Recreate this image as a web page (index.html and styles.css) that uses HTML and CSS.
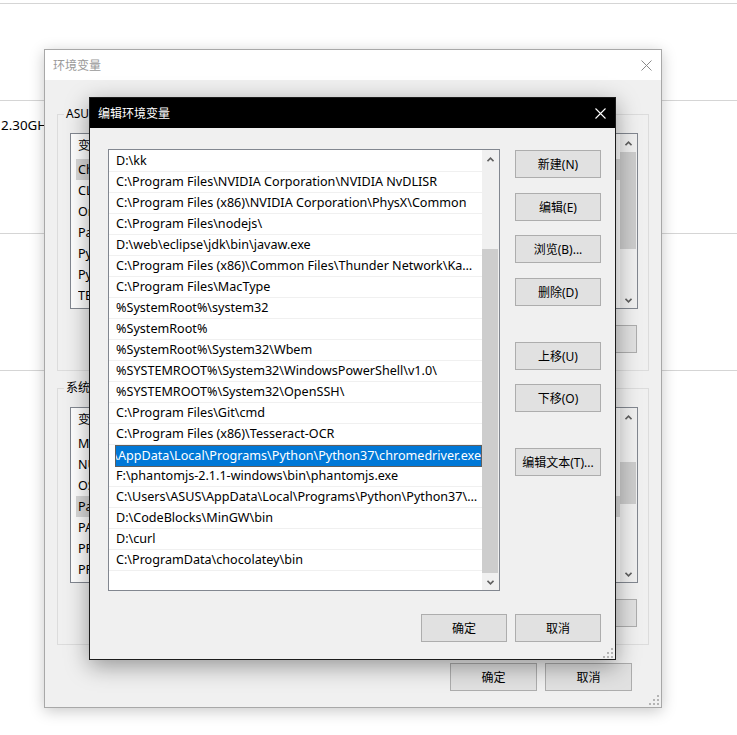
FILE: index.html
```html
<!DOCTYPE html>
<html lang="zh-CN">
<head>
<meta charset="utf-8">
<title>编辑环境变量</title>
<link rel="stylesheet" href="styles.css">
</head>
<body>
<div class="desk">
  <div class="desk-top"></div>
  <div class="desk-row1"></div>
  <div class="desk-row2"><span class="desk-text">2.30GHz</span></div>
  <div class="desk-row3"></div>
</div>

<div class="win-outer">
  <div class="outer-title">
    <span>环境变量</span>
    <span class="close-box"><svg width="11" height="11" viewBox="0 0 11 11"><path d="M0.5 0.5L10.5 10.5M10.5 0.5L0.5 10.5" stroke="#8a8a8a" stroke-width="1" fill="none"/></svg></span>
  </div>
  <div class="outer-body">
    <div class="group">
      <div class="group-title">ASUS 的用户变量(U)</div>
      <div class="olist">
        <div class="ol-cols">
          <div class="ol-head"><span class="c1">变量</span><span class="c2">值</span></div>
          <div class="ol-row sel"><span class="c1">ChocolateyLastPathUpdate</span><span class="c2">132097562843218740</span></div>
          <div class="ol-row"><span class="c1">CLASSPATH</span><span class="c2">.;%JAVA_HOME%\lib</span></div>
          <div class="ol-row"><span class="c1">OneDrive</span><span class="c2">C:\Users\ASUS\OneDrive</span></div>
          <div class="ol-row"><span class="c1">Path</span><span class="c2">C:\Users\ASUS\AppData\Local\Programs\Python\Python37\Scripts\</span></div>
          <div class="ol-row"><span class="c1">PyCharm</span><span class="c2">D:\PyCharm\bin;</span></div>
          <div class="ol-row"><span class="c1">PyCharm Community Edition</span><span class="c2">D:\PyCharm Community Edition\bin;</span></div>
          <div class="ol-row"><span class="c1">TEMP</span><span class="c2">%USERPROFILE%\AppData\Local\Temp</span></div>
        </div>
        <div class="sb">
          <div class="sb-btn"><svg width="7" height="5" viewBox="0 0 7 5"><path d="M0.5 4.2L3.5 1.2L6.5 4.2" stroke="#606060" stroke-width="1.6" fill="none"/></svg></div>
          <div class="sb-track"><div class="sp1"></div><div class="sb-thumb th1"></div></div>
          <div class="sb-btn"><svg width="7" height="5" viewBox="0 0 7 5"><path d="M0.5 0.8L3.5 3.8L6.5 0.8" stroke="#606060" stroke-width="1.6" fill="none"/></svg></div>
        </div>
      </div>
      <div class="gbtns">
        <div class="btn">新建(N)...</div>
        <div class="btn">编辑(E)...</div>
        <div class="btn">删除(D)</div>
      </div>
    </div>

    <div class="group group2">
      <div class="group-title">系统变量(S)</div>
      <div class="olist">
        <div class="ol-cols">
          <div class="ol-head"><span class="c1">变量</span><span class="c2">值</span></div>
          <div class="ol-row"><span class="c1">MOZ_PLUGIN_PATH</span><span class="c2">C:\Program Files (x86)\Foxit Software\</span></div>
          <div class="ol-row"><span class="c1">NUMBER_OF_PROCESSORS</span><span class="c2">8</span></div>
          <div class="ol-row"><span class="c1">OS</span><span class="c2">Windows_NT</span></div>
          <div class="ol-row sel"><span class="c1">Path</span><span class="c2">D:\kk;C:\Program Files\NVIDIA Corporation\NVIDIA NvDLISR;</span></div>
          <div class="ol-row"><span class="c1">PATHEXT</span><span class="c2">.COM;.EXE;.BAT;.CMD;.VBS;.VBE;.JS;.JSE;.WSF;.WSH;.MSC</span></div>
          <div class="ol-row"><span class="c1">PROCESSOR_ARCHITECTURE</span><span class="c2">AMD64</span></div>
          <div class="ol-row"><span class="c1">PROCESSOR_IDENTIFIER</span><span class="c2">Intel64 Family 6 Model 158 Stepping 9</span></div>
        </div>
        <div class="sb">
          <div class="sb-btn"><svg width="7" height="5" viewBox="0 0 7 5"><path d="M0.5 4.2L3.5 1.2L6.5 4.2" stroke="#606060" stroke-width="1.6" fill="none"/></svg></div>
          <div class="sb-track"><div class="sp2"></div><div class="sb-thumb th2"></div></div>
          <div class="sb-btn"><svg width="7" height="5" viewBox="0 0 7 5"><path d="M0.5 0.8L3.5 3.8L6.5 0.8" stroke="#606060" stroke-width="1.6" fill="none"/></svg></div>
        </div>
      </div>
      <div class="gbtns">
        <div class="btn">新建(W)...</div>
        <div class="btn">编辑(I)...</div>
        <div class="btn">删除(L)</div>
      </div>
    </div>

    <div class="outer-foot">
      <div class="btn btn-wide">确定</div>
      <div class="btn btn-wide">取消</div>
    </div>
  </div>
  <svg class="grip grip-outer" width="10" height="10" viewBox="0 0 10 10"><g fill="#b4b4b4"><rect x="8" y="0" width="2" height="2"/><rect x="4" y="4" width="2" height="2"/><rect x="8" y="4" width="2" height="2"/><rect x="0" y="8" width="2" height="2"/><rect x="4" y="8" width="2" height="2"/><rect x="8" y="8" width="2" height="2"/></g></svg>
</div>

<div class="win-inner">
  <div class="inner-title">
    <span>编辑环境变量</span>
    <span class="close-box"><svg width="11" height="11" viewBox="0 0 11 11"><path d="M0.5 0.5L10.5 10.5M10.5 0.5L0.5 10.5" stroke="#ffffff" stroke-width="1.1" fill="none"/></svg></span>
  </div>
  <div class="inner-body">
    <div class="ed-main">
      <div class="ed-list">
        <div class="ed-rows">
          <div class="ed-row">D:\kk</div>
          <div class="ed-row">C:\Program Files\NVIDIA Corporation\NVIDIA NvDLISR</div>
          <div class="ed-row">C:\Program Files (x86)\NVIDIA Corporation\PhysX\Common</div>
          <div class="ed-row">C:\Program Files\nodejs\</div>
          <div class="ed-row">D:\web\eclipse\jdk\bin\javaw.exe</div>
          <div class="ed-row">C:\Program Files (x86)\Common Files\Thunder Network\KanKan\Codecs</div>
          <div class="ed-row">C:\Program Files\MacType</div>
          <div class="ed-row">%SystemRoot%\system32</div>
          <div class="ed-row">%SystemRoot%</div>
          <div class="ed-row">%SystemRoot%\System32\Wbem</div>
          <div class="ed-row">%SYSTEMROOT%\System32\WindowsPowerShell\v1.0\</div>
          <div class="ed-row">%SYSTEMROOT%\System32\OpenSSH\</div>
          <div class="ed-row">C:\Program Files\Git\cmd</div>
          <div class="ed-row">C:\Program Files (x86)\Tesseract-OCR</div>
          <div class="ed-edit"><span class="ed-sel">C:\Users\ASUS\AppData\Local\Programs\Python\Python37\chromedriver.exe</span></div>
          <div class="ed-row">F:\phantomjs-2.1.1-windows\bin\phantomjs.exe</div>
          <div class="ed-row">C:\Users\ASUS\AppData\Local\Programs\Python\Python37\Scripts\</div>
          <div class="ed-row">D:\CodeBlocks\MinGW\bin</div>
          <div class="ed-row">D:\curl</div>
          <div class="ed-row">C:\ProgramData\chocolatey\bin</div>
        </div>
        <div class="sb">
          <div class="sb-btn"><svg width="7" height="5" viewBox="0 0 7 5"><path d="M0.5 4.2L3.5 1.2L6.5 4.2" stroke="#606060" stroke-width="1.6" fill="none"/></svg></div>
          <div class="sb-track"><div class="sp3"></div><div class="sb-thumb th3"></div></div>
          <div class="sb-btn"><svg width="7" height="5" viewBox="0 0 7 5"><path d="M0.5 0.8L3.5 3.8L6.5 0.8" stroke="#606060" stroke-width="1.6" fill="none"/></svg></div>
        </div>
      </div>
      <div class="btn-col">
        <div class="btn b1">新建(N)</div>
        <div class="btn b2">编辑(E)</div>
        <div class="btn b3">浏览(B)...</div>
        <div class="btn b4">删除(D)</div>
        <div class="btn b5">上移(U)</div>
        <div class="btn b6">下移(O)</div>
        <div class="btn b7">编辑文本(T)...</div>
      </div>
    </div>
    <div class="ed-foot">
      <div class="btn">确定</div>
      <div class="btn">取消</div>
    </div>
  </div>
  <svg class="grip grip-inner" width="10" height="10" viewBox="0 0 10 10"><g fill="#b4b4b4"><rect x="8" y="0" width="2" height="2"/><rect x="4" y="4" width="2" height="2"/><rect x="8" y="4" width="2" height="2"/><rect x="0" y="8" width="2" height="2"/><rect x="4" y="8" width="2" height="2"/><rect x="8" y="8" width="2" height="2"/></g></svg>
</div>
</body>
</html>
```

FILE: styles.css
```css
* { box-sizing: border-box; }
html, body { margin: 0; padding: 0; }
body {
  width: 737px;
  height: 735px;
  overflow: hidden;
  position: relative;
  background: #ffffff;
  font-family: "Noto Sans", "Noto Sans CJK SC", sans-serif;
  font-size: 12px;
  color: #000;
}

/* background settings page */
.desk-top { height: 4px; border-bottom: 1px solid #d5d5d5; }
.desk-row1 { height: 97px; border-bottom: 1px solid #d5d5d5; }
.desk-row2 { height: 133px; border-bottom: 1px solid #d5d5d5; padding: 15px 0 0 1px; }
.desk-row3 { height: 137px; border-bottom: 1px solid #d5d5d5; }
.desk-text { font-size: 13.4px; line-height: 18px; color: #000; }

/* windows */
.win-outer {
  position: absolute;
  left: 44px;
  top: 49px;
  width: 618px;
  height: 659px;
  border: 1px solid #a8a8a8;
  background: #f0f0f0;
  box-shadow: 0 3px 14px rgba(0, 0, 0, 0.22);
}
.outer-title {
  height: 30px;
  background: #ffffff;
  display: flex;
  align-items: center;
  justify-content: space-between;
  padding-left: 8px;
  color: #999999;
}
.close-box {
  width: 30px;
  height: 30px;
  display: flex;
  align-items: center;
  justify-content: center;
}
.outer-body { padding: 34px 12px 0 12px; }

.group {
  height: 257px;
  border: 1px solid #dcdcdc;
  padding: 0 10px 0 12px;
}
.group2 { margin-top: 17px; }
.group-title {
  margin: -9px 0 0 -6px;
  width: fit-content;
  padding: 0 2px;
  height: 16px;
  line-height: 16px;
  background: #f0f0f0;
}
.olist {
  margin-top: 11px;
  height: 176px;
  border: 1px solid #828790;
  background: #ffffff;
  display: flex;
}
.ol-cols { flex: 1; min-width: 0; overflow: hidden; }
.ol-head {
  height: 25px;
  line-height: 24px;
  padding-left: 7px;
  display: flex;
  white-space: nowrap;
}
.ol-row {
  height: 21px;
  line-height: 21px;
  margin-left: 5px;
  padding-left: 2px;
  display: flex;
  white-space: nowrap;
  font-size: 12.6px;
}
.ol-row.sel { background: #d9d9d9; }
.c1 { width: 160px; flex-shrink: 0; overflow: hidden; }
.c2 { width: 330px; flex-shrink: 0; overflow: hidden; }

.gbtns {
  margin-top: 16px;
  padding-right: 1px;
  display: flex;
  justify-content: flex-end;
  gap: 8px;
}
.outer-foot {
  margin-top: 18px;
  padding-right: 17px;
  display: flex;
  justify-content: flex-end;
  gap: 8px;
}

.btn {
  width: 86px;
  height: 28px;
  border: 1px solid #adadad;
  background: #e1e1e1;
  display: flex;
  align-items: center;
  justify-content: center;
  white-space: nowrap;
  flex-shrink: 0;
}
.btn-wide { width: 87px; }

/* scrollbars */
.sb {
  width: 17px;
  flex-shrink: 0;
  background: #f0f0f0;
  display: flex;
  flex-direction: column;
}
.sb-btn {
  height: 17px;
  display: flex;
  align-items: center;
  justify-content: center;
  padding-top: 1px;
}
.sb-track { flex: 1; display: flex; flex-direction: column; }
.sb-thumb { background: #cdcdcd; margin-right: 1px; }
.sp1 { height: 1px; }
.th1 { height: 97px; }
.sp2 { height: 37px; }
.th2 { height: 42px; }
.sp3 { flex: 1; }
.th3 { height: 324px; }

.grip { position: absolute; }
.grip-outer { right: 2px; bottom: 2px; }
.grip-inner { right: 2px; bottom: 1px; }

/* edit dialog */
.win-inner {
  position: absolute;
  left: 89px;
  top: 97px;
  width: 527px;
  height: 563px;
  border: 1px solid #1c1c1c;
  background: #f0f0f0;
  box-shadow: 0 6px 22px rgba(0, 0, 0, 0.38);
}
.inner-title {
  height: 30px;
  background: #000000;
  color: #ffffff;
  display: flex;
  align-items: center;
  justify-content: space-between;
  padding-left: 8px;
}
.inner-body { padding: 21px 14px 0 18px; }
.ed-main { display: flex; gap: 15px; }
.ed-list {
  width: 392px;
  height: 442px;
  border: 1px solid #828790;
  background: #ffffff;
  display: flex;
}
.ed-rows { flex: 1; min-width: 0; padding-top: 1px; overflow: hidden; }
.ed-row {
  height: 21px;
  line-height: 20px;
  font-size: 12.6px;
  border-bottom: 1px solid #f0f0f0;
  padding: 0 3px 0 7px;
  white-space: nowrap;
  overflow: hidden;
  text-overflow: ellipsis;
}
.ed-edit {
  height: 22px;
  margin: 0 0 -1px 6px;
  border: 1px solid #5f5f5f;
  display: flex;
  justify-content: flex-end;
  overflow: hidden;
  background: #ffffff;
}
.ed-sel {
  flex-shrink: 0;
  background: #0078d7;
  color: #ffffff;
  font-size: 12.6px;
  line-height: 20px;
  white-space: nowrap;
}
.btn-col { display: flex; flex-direction: column; width: 86px; }
.b1 { margin-top: 1px; }
.b2 { margin-top: 15px; }
.b3 { margin-top: 14px; }
.b4 { margin-top: 15px; }
.b5 { margin-top: 36px; }
.b6 { margin-top: 14px; }
.b7 { margin-top: 36px; }
.ed-foot {
  margin-top: 23px;
  display: flex;
  justify-content: flex-end;
  gap: 8px;
}
```
